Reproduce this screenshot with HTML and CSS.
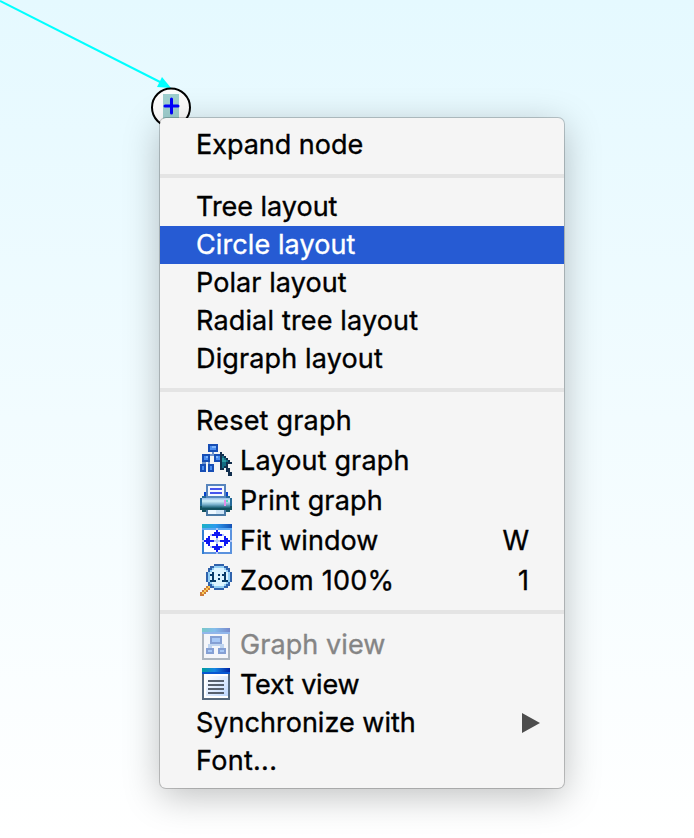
FILE: index.html
```html
<!DOCTYPE html>
<html lang="en">
<head>
<meta charset="utf-8">
<title>Graph</title>
<link rel="stylesheet" href="styles.css">
</head>
<body>
<svg class="graph" width="694" height="838" viewBox="0 0 694 838">
  <path d="M0 1L162 83" stroke="#0ff" stroke-width="2"/>
  <path d="M157 87L162 77L171 88Z" fill="#0ff"/>
  <circle cx="171" cy="107.500" r="19" fill="#fcfcfc" stroke="#000" stroke-width="2"/>
  <path d="M163 94h16v26h-16z" fill="#9fcfcf"/>
  <path d="M171.500 99v14M165 106h13" stroke="#00f" stroke-width="3" stroke-linecap="round"/>
</svg>
<nav class="menu">
  <div class="item"><span class="t1">Expand node</span></div>
  <hr>
  <div class="item"><span class="t2">Tree layout</span></div>
  <div class="item selected"><span class="t3">Circle layout</span></div>
  <div class="item"><span class="t4">Polar layout</span></div>
  <div class="item"><span class="t5">Radial tree layout</span></div>
  <div class="item"><span class="t6">Digraph layout</span></div>
  <hr>
  <div class="item"><span class="t7">Reset graph</span></div>
  <div class="item with-icon">
    <svg class="icon" viewBox="0 0 16 16" shape-rendering="crispEdges">
      <path d="M6 4h1v1h4v2H9V6H4v1H2V5h4zM2 9h1v1H1V9zM4 9h1v1h-1z" fill="#6f93cc"/>
      <path d="M4 0h5v4H4zM1 5h4v4H1zM7 5h4v4H7zM0 10h3v4H0zM4 10h3v4H4z" fill="#174eb5"/>
      <path d="M5 1h3v2H5zM2 6h2v2H2zM8 6h2v2H8zM1 11h1v2H1zM5 11h1v2H5z" fill="#4a8df0"/>
      <path d="M6 1h2v1H6zM3 6h1v1H3zM8 6h1v1H8z" fill="#7db5fb"/>
      <path d="M10 4h1v1h1v1h1v1h1v1h1v1h1v1h-2v2h1v2h1v2h-2v-2h-1v-2h-1v1h-2z" fill="#122f4e"/>
      <path d="M11 6h1v1h1v1h1v1h-1v2h-1v1h-1z" fill="#136c83"/>
      <path d="M11 7h1v1h1v1h-2z" fill="#2f9ba3"/>
    </svg><span class="t8">Layout graph</span></div>
  <div class="item with-icon">
    <svg class="icon" viewBox="0 0 16 16" shape-rendering="crispEdges">
      <defs><linearGradient id="printer" x2="0" y2="1"><stop stop-color="#96bde8"/><stop offset=".3" stop-color="#d3f2fb"/><stop offset=".65" stop-color="#79b1cd"/><stop offset="1" stop-color="#145b6f"/></linearGradient></defs>
      <path d="M2 4h12v3H2z" fill="#0744cb"/>
      <path d="M3 0h10v7H3z" fill="#5784bd"/><path d="M4 1h8v6H4z" fill="#f4f8ff"/>
      <path d="M5 2h6v1H5zM5 4h6v1H5z" fill="#4654ed"/>
      <path d="M1 6h14v1h1v6h-1v1H1v-1H0V7h1z" fill="#256a98"/>
      <path d="M0 11h16v2h-1v1H1v-1H0z" fill="#12505f"/>
      <path d="M1 7h14v5H1z" fill="url(#printer)"/>
      <path d="M3 6h10v1H3z" fill="#5587bd"/><path d="M12 8h1v3h-1z" fill="#e38de7"/><path d="M13 8h1v1h-1z" fill="#52dec0"/>
      <path d="M3 13h10v3H3z" fill="#4979a5"/><path d="M4 13h8v2H4z" fill="#eef8ff"/>
      <path d="M8 13h4v2H8z" fill="#d0e5f6"/>
    </svg><span class="t9">Print graph</span></div>
  <div class="item with-icon">
    <svg class="icon" viewBox="0 0 16 16" shape-rendering="crispEdges">
      <defs><linearGradient id="bar"><stop stop-color="#1bb2c5"/><stop offset=".45" stop-color="#2c9bed"/><stop offset="1" stop-color="#1552b5"/></linearGradient></defs>
      <path d="M1 0h15v15H1z" fill="#5b92de"/><path d="M1 0h15v2H1z" fill="url(#bar)"/><path d="M1 2h15v1H1z" fill="#5ba9f2"/><path d="M1 3h1v12H1z" fill="#337fd2"/>
      <path d="M2 3h13v11H2z" fill="#fff"/>
      <path d="M8 2h1v1H8zM1 8h1v1H1zM15 8h1v1h-1zM8 14h1v1H8zM8 7h1v1h1v1H9v1H8V9H7V8h1zM5 5h1v1H5zM11 5h1v1h-1zM5 11h1v1H5zM11 11h1v1h-1z" fill="#b4c8f7"/>
      <path d="M8 3h1v1h1v1h1v1H9v1H8V6H6V5h1V4h1zM8 10h1v1h2v1h-1v1H9v1H8v-1H7v-1H6v-1h2zM2 8h1V7h1V6h1v2h2v1H5v2H4v-1H3V9H2zM10 8h2V6h1v1h1v1h1v1h-1v1h-1v1h-1V9h-2z" fill="#101af4"/>
    </svg><span class="t10">Fit window</span><kbd>W</kbd></div>
  <div class="item with-icon">
    <svg class="icon" viewBox="0 0 16 16" shape-rendering="crispEdges">
      <path d="M0 14h1v-1h1v-1h1v-1h1v-1h1v1h1v1H5v1H4v1H3v1H2v1H0z" fill="#ca7b3c"/>
      <path d="M1 14h1v-1h1v-1h1v-1h1v1H4v1H3v1H2v1H1z" fill="#ffce52"/>
      <path d="M7 0h5v1h2v1h1v2h1v5h-1v2h-1v1h-2v1H7v-1H5v-1H4V9H3V4h1V2h1V1h2z" fill="#2f62ac"/>
      <path d="M7 1h5v1h1v1h1v1h1v5h-1v1h-1v1h-1v1H7v-1H6v-1H5V9H4V4h1V3h1V2h1z" fill="#92cff5"/>
      <path d="M7 2h5v1h1v1h1v5h-1v1h-1v1H7v-1H6V9H5V4h1V3h1z" fill="#dcf4ff"/>
      <path d="M6 4h1v5H6zM5 5h1v1H5zM5 8h3v1H5zM12 4h1v5h-1zM11 5h1v1h-1zM11 8h3v1h-3zM9 5h1v1H9zM9 7h1v1H9z" fill="#073b69"/>
    </svg><span class="t11">Zoom 100%</span><kbd>1</kbd></div>
  <hr>
  <div class="item with-icon disabled">
    <svg class="icon faded" viewBox="0 0 16 16" shape-rendering="crispEdges">
      <defs><linearGradient id="title"><stop stop-color="#009d9c"/><stop offset=".45" stop-color="#1686e3"/><stop offset="1" stop-color="#0022a3"/></linearGradient></defs>
      <path d="M1 0h14v16H1z" fill="#68798c"/><path d="M1 0h14v2H1z" fill="url(#title)"/><path d="M1 2h14v1H1z" fill="#2f78e3"/><path d="M2 3h12v12H2z" fill="#f4f8ff"/>
      <path d="M7 7h2v1h3v3h-2V9H6v2H4V8h3z" fill="#8ab7ef"/><path d="M5 4h6v4H5zM3 10h4v3H3zM9 10h4v3H9z" fill="#174eb5"/>
      <path d="M6 5h4v2H6zM4 11h2v1H4zM10 11h2v1h-2z" fill="#5b9df7"/>
    </svg><span class="t12">Graph view</span></div>
  <div class="item with-icon">
    <svg class="icon" viewBox="0 0 16 16" shape-rendering="crispEdges">
      <defs><linearGradient id="page" x2="1" y2="1"><stop stop-color="#fff"/><stop offset="1" stop-color="#bed8ff"/></linearGradient></defs>
      <path d="M1 0h14v16H1z" fill="#56697e"/><path d="M1 0h14v2H1z" fill="url(#title)"/><path d="M1 2h14v1H1z" fill="#0757d2"/><path d="M2 3h12v12H2z" fill="#fff"/><path d="M3 4h11v10H3z" fill="url(#page)"/>
      <path d="M4 6h8v1H4zM4 8h8v1H4zM4 10h8v1H4zM4 12h8v1H4z" fill="#56606f"/>
    </svg><span class="t13">Text view</span></div>
  <div class="item"><span class="t14">Synchronize with</span><i class="arrow"></i></div>
  <div class="item"><span class="t15">Font...</span></div>
</nav>
</body>
</html>
```
FILE: styles.css
```css
body {
  margin: 0;
  height: 838px;
  overflow: hidden;
  background: linear-gradient(#e5f9ff, #fff);
  font: 27px/38px Inter, sans-serif;
  color: #000;
}
.graph { position: absolute; left: 0; top: 0; }
.menu {
  position: relative;
  box-sizing: border-box;
  width: 404px;
  height: 670px;
  margin: 118px 0 0 160px;
  padding: 8px 0;
  border-radius: 6px;
  background: #f5f5f5;
  box-shadow: 0 0 0 1px rgba(0, 0, 0, .2), 0 8px 36px rgba(0, 0, 0, .25);
  -webkit-text-stroke: .35px currentColor;
}
.item {
  display: flex;
  align-items: center;
  box-sizing: border-box;
  height: 38px;
  padding: 0 35px 0 36px;
  white-space: nowrap;
}
.with-icon { height: 40px; padding-left: 40px; }
.with-icon span, kbd { padding-top: 2px; }
.icon { width: 32px; height: 32px; margin-right: 8px; flex: none; }
.selected { background: #265bd3; color: #fff; }
.disabled { color: #858585; }
.faded { opacity: .5; }
hr { height: 4px; margin: 10px 0; border: 0; background: #e4e4e4; }
kbd { margin-left: auto; font: inherit; }
.arrow {
  margin: 0 -11px 0 auto;
  border-left: 18px solid #4d4d4d;
  border-top: 10px solid transparent;
  border-bottom: 10px solid transparent;
}
.t1 { letter-spacing: -.02px; }
.t2 { letter-spacing: -.02px; }
.t3 { letter-spacing: .09px; }
.t4 { letter-spacing: .08px; }
.t5 { letter-spacing: .16px; }
.t6 { letter-spacing: .14px; }
.t7 { letter-spacing: .22px; }
.t8 { letter-spacing: .16px; }
.t9 { letter-spacing: .15px; }
.t10 { letter-spacing: .06px; }
.t11 { letter-spacing: .22px; }
.t12 { letter-spacing: .08px; }
.t13 { letter-spacing: -.2px; }
.t14 { letter-spacing: .02px; }
.t15 { letter-spacing: .3px; }
```
